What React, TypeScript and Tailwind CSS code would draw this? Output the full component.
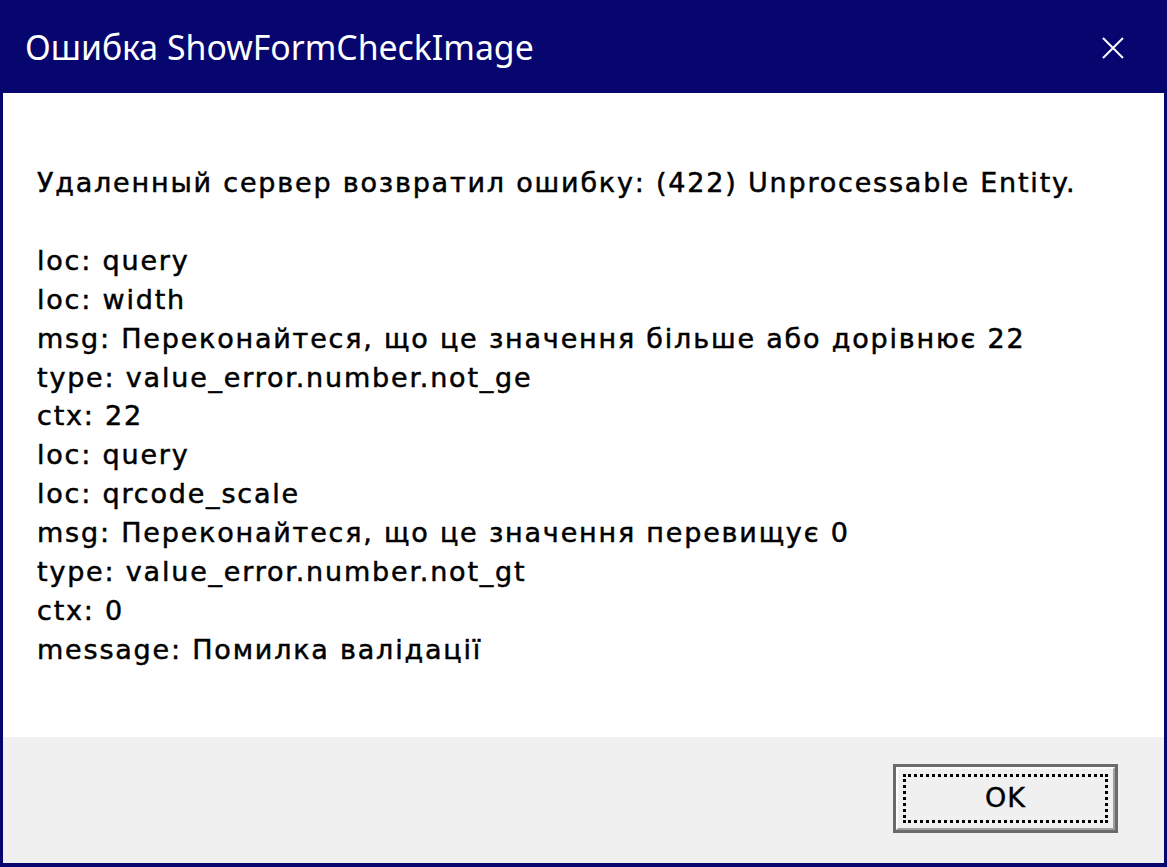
export default function App() {
    const lines = [
        "loc: query",
        "loc: width",
        "msg: Переконайтеся, що це значення більше або дорівнює 22",
        "type: value_error.number.not_ge",
        "ctx: 22",
        "loc: query",
        "loc: qrcode_scale",
        "msg: Переконайтеся, що це значення перевищує 0",
        "type: value_error.number.not_gt",
        "ctx: 0",
        "message: Помилка валідації",
    ];

    return (
        <div className="w-[1167px] h-[867px] bg-[#06066e] flex flex-col px-[3px] pb-[4px]">
            {/* Title bar */}
            <div className="h-[93px] flex items-center justify-between shrink-0">
                <span className="pl-[22px] pt-[2px] text-white text-[33.8px] font-['Noto_Sans',sans-serif]">
                    Ошибка ShowFormCheckImage
                </span>
                <svg className="w-[24px] h-[24px] mr-[39px] mt-[2px]" viewBox="0 0 24 24" fill="none" stroke="white" strokeWidth="2">
                    <path d="M2 2L22 22M22 2L2 22" />
                </svg>
            </div>

            {/* Message */}
            <div className="flex-1 bg-white pl-[34px] pt-[71px] text-black text-[27px] tracking-[1.8px] leading-[38.9px] [-webkit-text-stroke:0.5px_black] font-['DejaVu_Sans',sans-serif]">
                <div>Удаленный сервер возвратил ошибку: (422) Unprocessable Entity.</div>
                <div className="h-[38.9px]" />
                {lines.map((line, i) => (
                    <div key={i}>{line}</div>
                ))}
            </div>

            {/* Footer */}
            <div className="h-[126px] bg-[#f0f0f0] flex items-start justify-end pr-[46px] pt-[27px] shrink-0">
                <button className="w-[225px] h-[69px] bg-[#6b6b6b] p-[3px] flex">
                    <div className="flex-1 bg-[#f0f0f0] border-t-2 border-l-2 border-white border-r-2 border-r-[#a0a0a0] border-b-2 border-b-[#a0a0a0] p-[5px] flex">
                        <div className="flex-1 border-[3px] border-dotted border-black flex items-center justify-center text-[27px] tracking-[1px] text-black [-webkit-text-stroke:0.4px_black] font-['DejaVu_Sans',sans-serif]">
                            OK
                        </div>
                    </div>
                </button>
            </div>
        </div>
    );
}
